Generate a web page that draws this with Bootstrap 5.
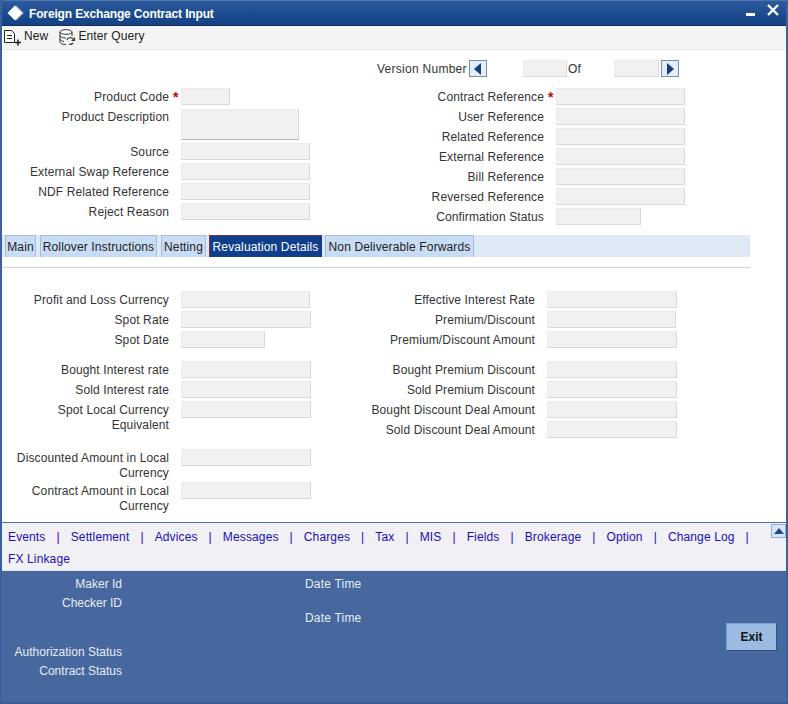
<!DOCTYPE html>
<html lang="en"><head><meta charset="utf-8"><title>Foreign Exchange Contract Input</title>
<link href="https://cdn.jsdelivr.net/npm/bootstrap@5.3.0/dist/css/bootstrap.min.css" rel="stylesheet">
<style>
html,body{margin:0;background:#fff}
body{font:12px/15px "Liberation Sans",Arial,sans-serif;color:#333;letter-spacing:.13px}
.win{width:788px;height:704px;border:solid #3a619c;border-width:0 2px 2px 2px;border-bottom-color:#3c5c8f;overflow:hidden}
.ttl{height:26px;background:linear-gradient(#2e5a9c,#1a4a8e 60%,#164283);border-top:1px solid #4d74aa;border-bottom:1px solid #10305f;color:#fff;font-weight:700;font-size:12px;padding-left:5px;letter-spacing:-.15px}
.ttl .nm{margin-left:4px;margin-top:2px}
.tbar{height:24px;background:#f4f4f4;border-bottom:1px solid #e6e6e6;color:#222;padding-bottom:2px}
.tool{display:flex;align-items:center}
.ver{height:37px;padding-top:10px}
.vtxt{padding-top:2px;letter-spacing:.27px;white-space:nowrap}
.fld{display:block;height:17px;min-height:0;padding:0;border-radius:0;background:#f1f1f1;border:1px solid;border-color:#ececec #d9d9d9 #d9d9d9 #ececec;box-shadow:none;flex:none}
.frow .fld{align-self:flex-start;margin-top:1px}
.w129{width:129px}.w130{width:130px}.w49{width:49px}.w44{width:44px}.w45{width:45px}.w85{width:85px}.w84{width:84px}
.frow .w118{width:118px;height:31px;margin-top:2px;border-bottom-color:#bbb}
.frow{height:20px;display:flex;align-items:center}
.lbl{text-align:right;flex:none}
.la{width:167px}
.star{width:12px;flex:none;color:#c00;font-weight:700;padding-left:4px;font-size:14px;line-height:12px}
.cola{width:308px;flex:none}
.colb .lbl{width:234px}
.navbtn{width:18px;height:17px;background:#e6edf7;border:1px solid #6f8fb3;display:flex;align-items:center;justify-content:center;padding:0;border-radius:0}
.strip{width:748px;height:22px;background:#dfe8f5;margin-top:8px;padding-left:3px;gap:3px}
.tabx{height:22px;padding:0;text-align:center;background:#c9dcf5;border:1px solid #a7bcd8;border-bottom:0;color:#222;line-height:22px;white-space:nowrap}
.tabx.on{background:#0f3f8c;color:#fff;border-color:#0f3f8c;border-top:1px solid #8a2b3a;border-left:1px solid #8a2b3a}
.t1{width:31px;margin-right:1px}.t2{width:117px;margin-right:1px}.t3{width:45px}.t4{width:113px}.t5{width:149px}
.rule{width:748px;height:1px;background:#ccd6e4;margin-top:10px}
.sec2{margin-top:22px;height:232px}
.cola2 .fld{margin-left:12px}
.colb2 .lbl{width:225px}
.colb2 .fld{margin-left:12px}
.frow.tall{height:auto;align-items:flex-start}
.frow.tall .lbl{padding-top:2.5px}
.frow.h35{height:35px}.frow.h33{height:33px}.frow.h30{height:30px}
.mt10x{margin-top:10px}.mt14x{margin-top:13px}
.lnks{height:49px;background:#f0f0f5;border-top:1px solid #4f6f9f;border-bottom:1px solid #dfe3ea;position:relative;padding:3px 0 0 6px;line-height:22px}
.lnks a{color:#1c0fb5;text-decoration:none}
.lnks i{font-style:normal;margin:0 11px;color:#1c0fb5}
.upb{position:absolute;right:0;top:1px;width:15px;height:14px;background:#d9e5f5;border:1px solid #8fb0da;display:flex;align-items:center;justify-content:center}
.foot{height:131px;background:#46689f;color:#e8edf5;position:relative;letter-spacing:0}
.mk{position:absolute;left:0;text-align:right;width:120px}
.dt{position:absolute;left:303px;letter-spacing:.2px}
.exitb{position:absolute;left:724px;top:52px;width:51px;height:28px;background:#9cbbe2;border:1px solid;border-color:#7f9fc9 #34507c #34507c #7f9fc9;border-radius:0;color:#111;font:700 12px "Liberation Sans",Arial,sans-serif;padding:0}
.m1{top:6px}.m2{top:25px}.m3{top:74px}.m4{top:93px}.d2{top:40px}
.tg1{margin-left:3px}.tg2{margin-left:10px}.tg3{margin-left:2px}
.vsp{margin-left:375px;height:17px;width:90px}.vg{margin-left:2px}.vin{margin-left:36px}.ofx{height:17px;margin-left:1px;width:46px}
</style></head>
<body>
<div class="win">
 <div class="ttl d-flex align-items-center">
  <svg width="18" height="16" viewBox="0 0 18 16"><path d="M9.500 .5l7.500 7.500-7.500 7.500-7.500-7.500z" fill="#7d9bc9"/><path d="M8 .5l7.500 7.500-7.500 7.500L.5 8z" fill="#fff"/></svg>
  <span class="nm">Foreign Exchange Contract Input</span>
  <span class="ms-auto d-flex align-items-center">
   <svg width="44" height="24" viewBox="0 0 44 24"><path d="M4 12h9v3H4z" fill="#fff"/><path d="M26 4l10 10M36 4L26 14" stroke="#fff" stroke-width="2.400" fill="none"/></svg>
  </span>
 </div>
 <div class="tbar d-flex align-items-center">
  <span class="tool"><svg width="19" height="18" viewBox="0 0 19 18"><path d="M2.500 2.500h7l3 3v9h-10zM5 7.500h5M5 10.500h5" fill="#fff" stroke="#222"/><path d="M13 14.500h6M16 11.500v6" stroke="#222" stroke-width="1.500" fill="none"/></svg><span class="tg1">New</span></span>
  <span class="tool tg2"><svg width="18" height="18" viewBox="0 0 18 18"><ellipse cx="8" cy="4" rx="6" ry="2.300" fill="#fff" stroke="#333"/><path d="M2 4v10c0 1.500 3 2.500 6 2.500M14 4v4M2 7.500c0 1.500 3 2.500 6 2.500M2 11c0 1.300 2 2.200 4 2.400" fill="none" stroke="#333"/><path d="M9 12a3.500 3.500 0 0 1 6-1l1 1.500M16.500 9.500v3h-3M15 15a3.500 3.500 0 0 1-4 1" fill="none" stroke="#333" stroke-width="1.200"/></svg><span class="tg3">Enter Query</span></span>
 </div>
 <div class="ver d-flex">
  <span class="frow vtxt vsp">Version Number</span>
  <button class="navbtn vg" aria-label="Previous"><svg width="8" height="12" viewBox="0 0 8 12"><path d="M7 0v12L0 6z" fill="#123f80"/></svg></button>
  <input class="form-control fld w44 vin">
  <span class="frow vtxt ofx">Of</span>
  <input class="form-control fld w45">
  <button class="navbtn vg" aria-label="Next"><svg width="8" height="12" viewBox="0 0 8 12"><path d="M1 0v12l7-6z" fill="#123f80"/></svg></button>
 </div>
 <div class="d-flex">
  <div class="cola">
   <div class="frow"><span class="lbl la">Product Code</span><span class="star">*</span><input class="form-control fld w49"></div>
   <div class="frow tall h35"><span class="lbl la">Product Description</span><span class="star"></span><input class="form-control fld w118"></div>
   <div class="frow"><span class="lbl la">Source</span><span class="star"></span><input class="form-control fld w129"></div>
   <div class="frow"><span class="lbl la">External Swap Reference</span><span class="star"></span><input class="form-control fld w129"></div>
   <div class="frow"><span class="lbl la">NDF Related Reference</span><span class="star"></span><input class="form-control fld w129"></div>
   <div class="frow"><span class="lbl la">Reject Reason</span><span class="star"></span><input class="form-control fld w129"></div>
  </div>
  <div class="colb">
   <div class="frow"><span class="lbl">Contract Reference</span><span class="star">*</span><input class="form-control fld w129"></div>
   <div class="frow"><span class="lbl">User Reference</span><span class="star"></span><input class="form-control fld w129"></div>
   <div class="frow"><span class="lbl">Related Reference</span><span class="star"></span><input class="form-control fld w129"></div>
   <div class="frow"><span class="lbl">External Reference</span><span class="star"></span><input class="form-control fld w129"></div>
   <div class="frow"><span class="lbl">Bill Reference</span><span class="star"></span><input class="form-control fld w129"></div>
   <div class="frow"><span class="lbl">Reversed Reference</span><span class="star"></span><input class="form-control fld w129"></div>
   <div class="frow"><span class="lbl">Confirmation Status</span><span class="star"></span><input class="form-control fld w85"></div>
  </div>
 </div>
 <div class="strip d-flex">
  <span class="tabx t1">Main</span><span class="tabx t2">Rollover Instructions</span><span class="tabx t3">Netting</span><span class="tabx t4 on">Revaluation Details</span><span class="tabx t5">Non Deliverable Forwards</span>
 </div>
 <div class="rule"></div>
 <div class="sec2 d-flex">
  <div class="cola cola2">
   <div class="frow"><span class="lbl la">Profit and Loss Currency</span><input class="form-control fld w129"></div>
   <div class="frow"><span class="lbl la">Spot Rate</span><input class="form-control fld w130"></div>
   <div class="frow"><span class="lbl la">Spot Date</span><input class="form-control fld w84"></div>
   <div class="frow mt10x"><span class="lbl la">Bought Interest rate</span><input class="form-control fld w130"></div>
   <div class="frow"><span class="lbl la">Sold Interest rate</span><input class="form-control fld w130"></div>
   <div class="frow tall h35"><span class="lbl la">Spot Local Currency Equivalent</span><input class="form-control fld w130"></div>
   <div class="frow tall mt14x h33"><span class="lbl la">Discounted Amount in Local Currency</span><input class="form-control fld w130"></div>
   <div class="frow tall h30"><span class="lbl la">Contract Amount in Local Currency</span><input class="form-control fld w130"></div>
  </div>
  <div class="colb2">
   <div class="frow"><span class="lbl">Effective Interest Rate</span><input class="form-control fld w130"></div>
   <div class="frow"><span class="lbl">Premium/Discount</span><input class="form-control fld w129"></div>
   <div class="frow"><span class="lbl">Premium/Discount Amount</span><input class="form-control fld w130"></div>
   <div class="frow mt10x"><span class="lbl">Bought Premium Discount</span><input class="form-control fld w130"></div>
   <div class="frow"><span class="lbl">Sold Premium Discount</span><input class="form-control fld w130"></div>
   <div class="frow"><span class="lbl">Bought Discount Deal Amount</span><input class="form-control fld w130"></div>
   <div class="frow"><span class="lbl">Sold Discount Deal Amount</span><input class="form-control fld w130"></div>
  </div>
 </div>
 <div class="lnks">
  <a href="#">Events</a><i>|</i><a href="#">Settlement</a><i>|</i><a href="#">Advices</a><i>|</i><a href="#">Messages</a><i>|</i><a href="#">Charges</a><i>|</i><a href="#">Tax</a><i>|</i><a href="#">MIS</a><i>|</i><a href="#">Fields</a><i>|</i><a href="#">Brokerage</a><i>|</i><a href="#">Option</a><i>|</i><a href="#">Change Log</a><i>|</i><br><a href="#">FX Linkage</a>
  <span class="upb"><svg width="10" height="6" viewBox="0 0 10 6"><path d="M5 0l5 6H0z" fill="#1f4a86"/></svg></span>
 </div>
 <div class="foot">
  <span class="mk m1">Maker Id</span><span class="dt m1">Date Time</span>
  <span class="mk m2">Checker ID</span><span class="dt d2">Date Time</span>
  <span class="mk m3">Authorization Status</span>
  <span class="mk m4">Contract Status</span>
  <button class="exitb">Exit</button>
 </div>
</div>
</body></html>
